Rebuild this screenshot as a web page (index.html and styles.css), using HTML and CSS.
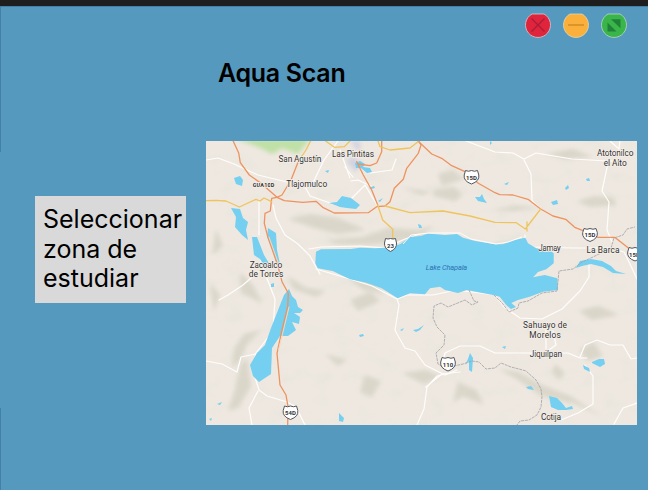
FILE: index.html
```html
<!DOCTYPE html>
<html lang="es">
<head>
<meta charset="utf-8">
<title>Aqua Scan</title>
<link rel="stylesheet" href="styles.css">
</head>
<body>
<div class="window">
  <header class="topbar">
    <h1 class="title">Aqua Scan</h1>
    <div class="controls">
      <svg class="control" viewBox="0 0 26 26"><path d="M7 2H19A12.5 12.5 0 1 1 7 2Z" fill="#e0243c" stroke="#d5cbd0" stroke-width=".8"/><path d="M6.5 6.5l13 13m0-13l-13 13" stroke="#a81d38" stroke-width="1.3"/></svg>
      <svg class="control" viewBox="0 0 26 26"><path d="M7 2H19A12.5 12.5 0 1 1 7 2Z" fill="#fbb03b" stroke="#e3d6b8" stroke-width=".8"/><path d="M5 13h16" stroke="#c98722" stroke-width="1.3"/></svg>
      <svg class="control" viewBox="0 0 26 26"><path d="M7 2H19A12.5 12.5 0 1 1 7 2Z" fill="#39b54a" stroke="#bcd8c4" stroke-width=".8"/><path d="M10 7.200h9.500v9zM6.500 10.500v9h9z" fill="#208238"/><path d="M9 9l8.500 8.500" stroke="#39b54a" stroke-width="1"/></svg>
    </div>
  </header>
  <main class="content">
    <button class="zone">Seleccionar<br>zona de<br>estudiar</button>
    <svg class="map" viewBox="206 141 430.500 284" preserveAspectRatio="none">
      <defs>
        <filter id="soft" x="-30%" y="-30%" width="160%" height="160%"><feGaussianBlur stdDeviation="2"/></filter>
        <filter id="relief" x="0" y="0" width="100%" height="100%">
          <feTurbulence type="fractalNoise" baseFrequency=".045 .065" numOctaves="3" seed="8"/>
          <feColorMatrix values="0 0 0 0 .79  0 0 0 0 .77  0 0 0 0 .69  3.200 0 0 0 -1.600"/>
        </filter>
      </defs>
      <rect x="206" y="141" width="431" height="284" fill="#eee8e1"/>
      <rect x="206" y="141" width="431" height="284" filter="url(#relief)" opacity=".42"/>
      <g filter="url(#soft)">
        <path d="M236 139H310L298 154 282 148 272 154 258 147Z" fill="#bfe0a6"/>
        <path d="M346 160l8-3 9 7-8 8zM350 141h10v12z" fill="#d2d2df"/>
        <g fill="#cfcbbb" opacity=".62">
          <path d="M288 219l22-5 28 4 28 12-28 4-26-7zM328 240l35-3 25-9 30 2 15-4-18 14-45 5-35-1z"/>
          <path d="M434 190l20-3 8 8-7 6-22-5zM438 174l14-4 12 9-22 7zM400 187l32 5-10 3z"/>
          <path d="M493 210l20-4 27 1-25 4zM577 201l18-5 18 2 4 7-27 2zM546 154l27-5 20 8-28 2z"/>
          <path d="M244 334l17-4-14 14-5 13-10 12 2-20zM240 366l7-8 4 28-13 22-10 2 7-20z"/>
          <path d="M350 300l20-8 10 9-22 10zM342 272l30 10 14 12-23-4zM288 276l18 12 20 3-10 6-23-8z"/>
          <path d="M498 369l20 3 24 13 28 11 33 21-28-13-33-8-27-18zM580 350l13-8 10 14-16 5zM555 364l10 9-6 7-7-8z"/>
          <path d="M365 375l16 6-9 16-12-5zM402 373l24-3 15 7-17 7zM458 382l18 8 8 15-21-9-10 7zM579 311l20-5 20 9-27 5z"/>
          <path d="M216 229l7 17-11 9zM210 283l10 12-6 17zM240 272l13 13 9 18-21-10zM325 354l22 6-9 6zM493 244l30-4-22 8z"/>
        </g>
      </g>

      <g class="road minor">
        <path d="M206 160l12-2 16 6 24 11 29 7 16 1 7 13 23 8"/>
        <path d="M338 141l-14 19-13 27M345 167l8 10M377 205l-12-20-14 14-8-2M351 181l7-1 13 6M340 150l10 28M370 173l22-3 4-11"/>
        <path d="M259 201v34M273 205l3 13 9 17 13 9 12 12 10 18"/>
        <path d="M466 141l29 11 18 1 11 6 12-6 36 6 36 2 8 0M524 160l7 14 1 27 9 8 M610 141l9 8 1-8M608 163l-6 28 7 11-2 28 5 12"/>
        <path d="M257 240l4 22 5 14 9 23-2 32-17 22-3 18 6 19 8 6 20 6 9 5 9 18M219 300l9-5 15-10 15-13"/>
        <path d="M309 249l12-2 39-1 25 2 20-9 15-5"/>
        <path d="M316 269l34 10 22 7 25 13 10-4 26 0 23-5 40 5"/>
        <path d="M397 299l2 6-4 25 2 4 8 14 10 3 10 14 20 10 12-5"/>
        <path d="M442 366l3-13 15-7 20 0 15 7 29 0 44 0 12 5h7"/>
        <path d="M445 374l-8 2-10 11-3 22-7 16M426 387l16-13 18-2"/>
        <path d="M525 235v8l7 4 41 1h37l14 4 6 12 7 15M589 259v18l-9 14-18 18-20 10-22-1-16-11-9-12"/>
        <path d="M546 330v22l10-7-3-14M580 357l5-12 12-5 13 5 13 0 8 14 6-1M585 365l8 11 0 28-15 9-17 7M637 403l-14 5-9 16"/>
        <path d="M206 361l16 3 15 8 4-15 15-3M258 391l-9 17 3 17"/>
      </g>

      <g class="water">
        <path d="M316 251.700L321 249.300 351 249 360 247.700 375 248.300 385 247.700 400 244.300 410 237 421 236 428 233.500 445 235 457 234 463 237.700 475 241 495 244.300 503 244.300 514.700 240 525.300 237.700 528 243.300 536.300 248.300 548 249 553.700 253.300V263.300L546.300 269.300 538 272 533 277.300 544.700 275 557.300 278.300 558 290 543 291.700 529.700 296.700 518 300 511.300 303 516 307 511 309 506.300 305 499.700 296.700 493 295 466.700 290 458 293 445 290 440 286.700 430 288.300 425 294.300 410 293.300 397.700 298.300 381.700 288.300 366.700 282.700 350 279.300 332.700 271 317.700 268.300 315.300 263.300Z"/>
        <path d="M231 208l9 1 3 9 5 4-2 8 2 10-6-5-7-8 1-10zM234 178l6-2 3 4-1 6-6-2zM268 228l8 5 1 17 3 14-4-2-5-17-4-8zM252 237l5 0 7 18 6 10-5 2-5-8-6-4z"/>
        <path d="M284 295l5-6 3 7 4 4 2 7 5 3-3 3-6 0 6 4-1 7-7-2 4 8-8 6-8 0-8 12-1 26-12 8-6-6-3-11 7-12 8-8 6-17z"/>
        <path d="M271 284l3-1 0 4-3 0zM329 203l8-1 5-6 9 2 9 7-4 4-9-1-7-1-5-2zM355 163l5-2 5 3-2 3 7 1 2 4-5 1-6-5-5 0zM369 188l5-2 1 2-4 1zM378 201l5-3-3 4zM325 171l4-1-1 3z"/>
        <path d="M475 197l5 0 2-3 2 5 3 4-9-2zM504 184l5-2-2 3zM565 188l3-3 1 3-3 2zM586 179l3-1 1 3-3 0zM551 202l6-2 1 4-5 1zM418 224l3 1 1 3-3 0zM490 141l2 2-2 2z"/>
        <path d="M576 268l4-7 11-2 11 2 9 5 5 5 10 3-13-1-10-6-12-3-9 2zM413 330l5-1 6-4-4 5-4 2zM400 330l4-2-2 3zM359 335l4-1 1 2-4 1zM470 353l3 5-1 14-3-2 0-9-4 4 3-6z"/>
        <path d="M592 362l7-3 5 0 1 5-5 3-8-4zM583 365l6 3 1 4-6-3zM549 396l8 2 5 5 4 5 6-2 1 3-7 1-8 0-7-3zM526 387l5-1 3 4-6-1zM502 347l4-1-1 3zM339 413l5 5-1 4-4-1zM217 404l5-2-2 3zM209 419l3-1-1 3z"/>
      </g>
      <path class="shore" d="M403 244l8-9 18-2 31 0 11 6 25 5 12-2 14-5"/>
      <path class="border" d="M469 290l5 11 4 1-6 3-7-5-17 7-7-4-7 3-1 12 4 9 8 8-1 10-8 8 2 11 7 4 18-4 9-3 7 1 7 7 9-1 6-5 10 4 8 2 7 2 10 9 5 9 1 8-1 10-4 8-8 5-9 1-6 8M494 295l8 8 7 9 9-4 1-5 9-2 14-8 15-2 2-20 14-2 9-7 11-5 18-9 3-10 9-3 4-6 8-2"/>

      <g class="road main">
        <path d="M232.700 140L238.700 153 240.300 162.700 249.300 175 261 183.300 277 197.300 284.300 200.700 302.700 202.300 316 201.300 322.700 207.300 334.300 213 368.300 212.700 376.700 206.700 385 206 390 201.700 394.300 188.300 403.300 179.300 406.700 168.300 418.300 153.300 421 145 418 140"/>
        <path d="M417 140L431.700 154 441.700 158.300 451.700 165.700 465 171.700 478.300 183.300 495 192.700 499.700 194.700 513 195 528 199.300 540.700 209 553 216 565.700 219.300 574.700 227.300 583 230.700 598 237.300H614.700L629.700 249"/>
        <path d="M356.700 161.700L363.300 175 371.700 190 377.700 205M358 164L370 165.700 376.700 163 381.700 151.700V140"/>
        <path d="M277 197.300L282 195 291 180 297.700 163 302 156"/>
        <path d="M277 197.300L271.700 198.300 270.300 211 265 213.300 264.300 223.300 267.700 236.700 277.700 265 282 281.700 288.300 293.300 287.700 306.700 282 330 277 353.300 280 385 286 395 288 406.700 287.700 425"/>
        <path class="casing" d="M269 237L279 265M289 307L283.500 330 278.500 350"/>
      </g>
      <g class="road yellow">
        <path d="M206 200.700L216 200.300 226 201 239.300 207 256 199.300 260 201 264 198 271.700 201.700M302 156L306 150 311 140M324.300 140L334.300 147.300 344.300 146.700 351 140M378 141L380 146.700 390 150 410 148 418 141.700"/>
        <path d="M385 206L410 212.700 443 211 470 216 495 222.300 516.300 222.700 525.300 229 540.700 209M527 222V231M377.700 205L382.700 220 392.700 229.300V240"/>
      </g>

      <g class="shield">
        <path d="M465.500 170.500q3 1.500 6 0 3 1.500 6 0l1.300 4.500q1 6-7.300 9-8.300-3-7.300-9z"/>
        <path d="M584 228.500q3 1.500 6 0 3 1.500 6 0l1.300 4q1 6-7.300 9-8.300-3-7.300-9z"/>
        <path d="M385.500 238.500q2.500 1 5 0 2.500 1 5 0l1 4.500q.5 5.500-6 8.500-6.500-3-6-8.500z"/>
        <path d="M442 357.500q3 1.500 6 0 3 1.500 6 0l1.300 4.500q1 6-7.300 9-8.300-3-7.300-9z"/>
        <path d="M284.500 406q3 1.500 6 0 3 1.500 6 0l1.300 4.500q1 6-7.300 9-8.300-3-7.300-9z"/>
        <path d="M629 247.500q3 1.500 6 0 3 1.500 6 0l1.300 4.500q1 6-7.300 9-8.300-3-7.300-9z"/>
      </g>
      <g class="shield-label">
        <text x="471.500" y="179.800">15D</text><text x="590" y="237.300">15D</text><text x="390.500" y="247.600">23</text>
        <text x="448" y="366.800">110</text><text x="290.500" y="415.300">54D</text><text x="634.500" y="256.800">15D</text>
      </g>
      <g class="place">
        <text x="300" y="161.800" textLength="43">San Agustín</text>
        <text x="353" y="157.200" textLength="42">Las Pintitas</text>
        <text x="306.700" y="187.200" textLength="41">Tlajomulco</text>
        <text x="615.200" y="156.300" textLength="36.500">Atotonilco</text>
        <text x="615.200" y="165.500" textLength="23">el Alto</text>
        <text x="549.500" y="251.300" textLength="22.500">Jamay</text>
        <text x="603" y="252.900" textLength="33">La Barca</text>
        <text x="266" y="268.200" textLength="32.500">Zacoalco</text>
        <text x="266" y="277.300" textLength="34.500">de Torres</text>
        <text x="545" y="328" textLength="44">Sahuayo de</text>
        <text x="545" y="338.200" textLength="31.500">Morelos</text>
        <text x="546" y="356.500" textLength="32.500">Jiquilpan</text>
        <text x="551" y="420" textLength="20">Cotija</text>
        <text class="toll" x="263.500" y="187" textLength="21.500">GUA10D</text>
        <text class="lake" x="446.500" y="269.800" textLength="41.500">Lake Chapala</text>
      </g>
    </svg>
  </main>
</div>
</body>
</html>
```
FILE: styles.css
```css
* { box-sizing: border-box; }
body { margin: 0; }
.window {
  height: 490px;
  overflow: hidden;
  border-top: 6px solid #1e1e1e;
  background:
    linear-gradient(#447fa5, #447fa5) 0 0 / 1px 146px no-repeat,
    linear-gradient(#447fa5, #447fa5) 0 100% / 1px 82px no-repeat,
    linear-gradient(#447fa5, #447fa5) 0 0 / 100% 1px no-repeat,
    #5599bf;
  font-family: Inter, "Liberation Sans", sans-serif;
  color: #000;
}
.topbar {
  display: flex;
  justify-content: space-between;
  height: 135px;
  padding: 6px 21px 0 218px;
}
.title {
  margin: 45px 0 0;
  font-size: 25px;
  line-height: 32px;
  font-weight: 600;
  letter-spacing: -0.3px;
  white-space: nowrap;
}
.controls { display: flex; gap: 12px; }
.control { width: 26px; height: 26px; }
.content {
  display: flex;
  align-items: flex-start;
  gap: 20px;
  padding-left: 35px;
}
.zone {
  width: 151px;
  height: 107px;
  margin: 55px 0 0;
  padding: 0 0 0 8px;
  border: 0;
  background: #d9d9d9;
  color: #000;
  font: 400 25px/29.7px Inter, "Liberation Sans", sans-serif;
  text-align: left;
  white-space: nowrap;
}
.map { display: block; width: 430.5px; height: 284px; flex: none; }
.road { fill: none; stroke-linejoin: round; stroke-linecap: round; }
.minor { stroke: #fffdfb; stroke-width: 1.2; }
.main { stroke: #ee935f; stroke-width: 1.3; }
.main .casing { stroke: #f5d9bd; stroke-width: 1; }
.yellow { stroke: #efc45c; stroke-width: 1.3; }
.water { fill: #74cff0; }
.shore { fill: none; stroke: #fffdfb; stroke-width: 1; }
.border { fill: none; stroke: #a3a0a5; stroke-width: 0.8; stroke-dasharray: 3 0.8; }
.shield { fill: #fff; stroke: #55565c; stroke-width: 1; }
.shield-label {
  font: 700 6px Roboto, sans-serif;
  text-anchor: middle;
  fill: #333;
}
.place {
  font: 400 8.4px Roboto, sans-serif;
  text-anchor: middle;
  fill: #333;
  stroke: #f3eee8;
  stroke-width: 1.5px;
  paint-order: stroke;
}
.place .toll { font-size: 5.5px; font-weight: 700; }
.place .lake { font-size: 7.4px; font-style: italic; fill: #2f72b5; stroke: none; }
```
